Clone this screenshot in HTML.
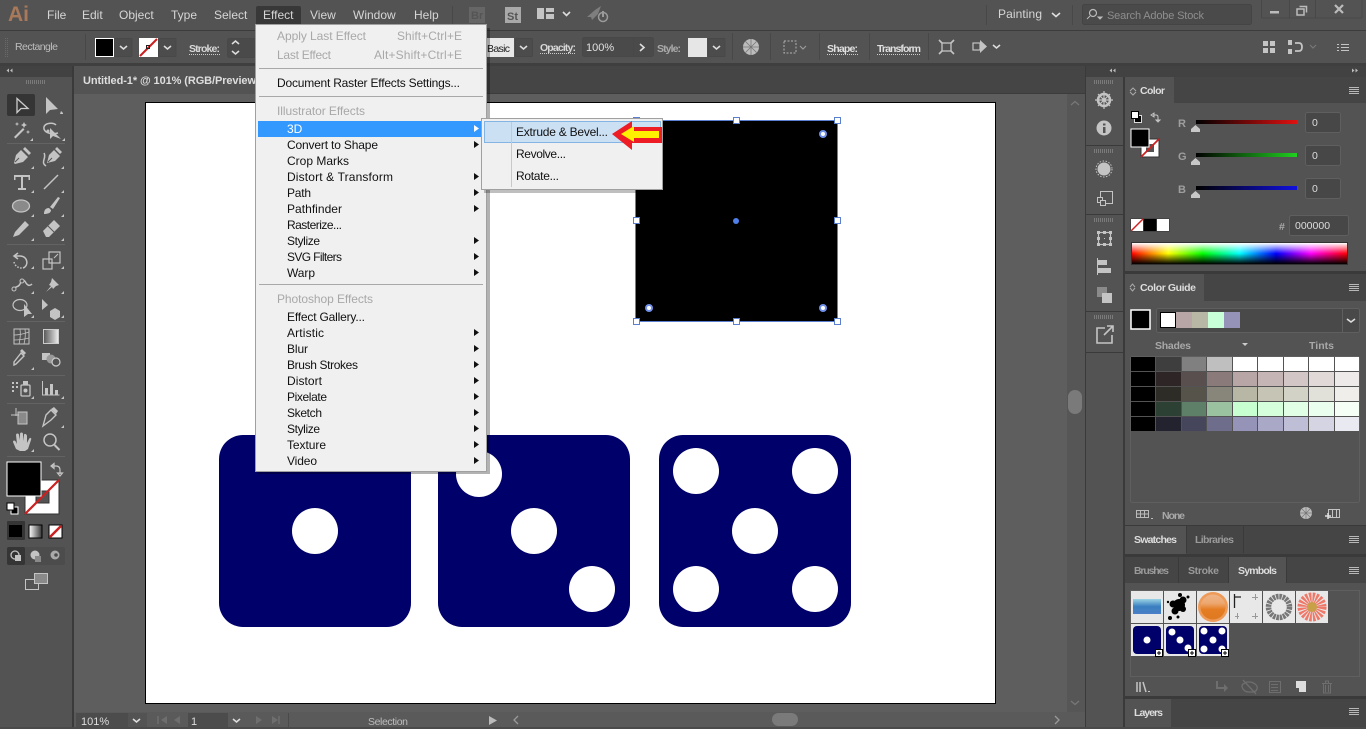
<!DOCTYPE html>
<html lang="en"><head><meta charset="utf-8"><title>Illustrator</title>
<style>
html,body{margin:0;padding:0;width:1366px;height:729px;overflow:hidden;background:#535353}
svg{display:block}
text{font-family:"Liberation Sans",sans-serif;font-size:12px}
.mb{fill:#d6d6d6;font-size:12px}
.c{fill:#d2d2d2;font-size:10.5px}
.b{font-weight:bold}
.m{fill:#111;font-size:12px}
.d{fill:#a8a8a8;font-size:12px}
.t{fill:#ddd;font-size:10.5px;font-weight:bold}
.t2{fill:#9a9a9a;font-size:10.5px;font-weight:bold}
.i{fill:#c4c4c4}
.s{fill:none;stroke:#c4c4c4;stroke-width:1.5}
.ch{fill:none;stroke:#ddd;stroke-width:1.6}
.u{stroke:#ccc;stroke-width:1;stroke-dasharray:1 1;fill:none}
.ar{fill:#111}
.hb{stroke:#b8b8b8;stroke-width:1;fill:none}
.gr{stroke:#7a7a7a;stroke-width:1;stroke-dasharray:1 0;fill:none}
</style></head><body>
<svg width="1366" height="729" viewBox="0 0 1366 729" xmlns="http://www.w3.org/2000/svg">
<rect width="1366" height="729" fill="#535353"/>

<!-- top menu bar -->
<rect x="0" y="30" width="1366" height="1" fill="#3c3c3c"/>
<text x="8" y="21" style="font-size:21px;font-weight:bold;fill:#a8795a">Ai</text>
<text class="mb" x="47" y="19">File</text>
<text class="mb" x="82" y="19">Edit</text>
<text class="mb" x="119" y="19">Object</text>
<text class="mb" x="171" y="19">Type</text>
<text class="mb" x="214" y="19">Select</text>
<rect x="256" y="6" width="45" height="20" rx="2" fill="#383838"/>
<text class="mb" x="263" y="19">Effect</text>
<text class="mb" x="310" y="19">View</text>
<text class="mb" x="353" y="19">Window</text>
<text class="mb" x="414" y="19">Help</text>
<rect x="452" y="6" width="1" height="18" fill="#484848"/>
<rect x="469" y="7" width="16" height="16" fill="#666"/>
<text x="471" y="19" style="font-size:11px;font-weight:bold;fill:#555">Br</text>
<rect x="505" y="7" width="16" height="16" fill="#a9a9a9"/>
<text x="507" y="20" style="font-size:11px;font-weight:bold;fill:#555">St</text>
<path d="M537 8h7v11h-7zM546 8h8v4h-8zM546 14h8v5h-8z" fill="#c4c4c4"/>
<path d="M563 12l3.500 3.500L570 12" class="ch"/>
<path d="M587 17l8-7 6-4-3 8-6 6-1-3z" fill="#7e7e7e"/>
<circle cx="603" cy="17" r="4.500" fill="none" stroke="#9a9a9a" stroke-width="1.500"/>
<rect x="602" y="11" width="2" height="6" fill="#9a9a9a"/>
<rect x="986" y="5" width="1" height="20" fill="#484848"/>
<text class="mb" x="998" y="18" textLength="44">Painting</text>
<path d="M1052 13l4 3.500 4-3.500" class="ch"/>
<rect x="1072" y="5" width="1" height="20" fill="#484848"/>
<rect x="1082.500" y="4.500" width="169" height="20" rx="2" fill="#4a4a4a" stroke="#444"/>
<circle cx="1093" cy="13" r="3.500" fill="none" stroke="#bbb" stroke-width="1.200"/>
<path d="M1090 16l-3 3M1098 17h4l-2 2z" stroke="#bbb" fill="#bbb" stroke-width="1"/>
<text x="1107" y="19" style="font-size:11px;fill:#8e8e8e" textLength="97">Search Adobe Stock</text>
<path d="M1261.500 0v16.500q0 1.500 2 1.500h97q1.500 0 1.500-1.500V0M1289.500 0v18M1315.500 0v18" fill="none" stroke="#484848"/>
<rect x="1270" y="11" width="9" height="2.500" fill="#bbb"/>
<path d="M1297 9h7v6h-7zM1299.500 6.500h7v6" fill="none" stroke="#bbb" stroke-width="1.500"/>
<path d="M1335 5l8 8M1343 5l-8 8" stroke="#bbb" stroke-width="2.200"/>

<!-- control bar -->
<rect x="0" y="63" width="1366" height="3" fill="#3f3f3f"/>
<path d="M5.500 38v19M7.500 38v19" stroke="#6a6a6a" stroke-dasharray="1 1" fill="none"/>
<text class="c" x="15" y="50" style="fill:#bdbdbd" textLength="43">Rectangle</text>
<rect x="85" y="34" width="1" height="26" fill="#484848"/>
<rect x="95.500" y="38.500" width="18" height="18" fill="#000" stroke="#fff"/>
<rect x="114.500" y="38.500" width="17.500" height="18" rx="1" fill="#4c4c4c" stroke="#484848"/>
<path d="M120 46l3.500 3 3.500-3" class="ch"/>
<rect x="139" y="38" width="19" height="19" fill="#fff"/>
<path d="M140 56l17-17" stroke="#cc2020" stroke-width="2"/>
<rect x="146.500" y="45.500" width="3" height="3" fill="none" stroke="#222"/>
<rect x="158.500" y="38.500" width="17.500" height="18" rx="1" fill="#4c4c4c" stroke="#484848"/>
<path d="M164 46l3.500 3 3.500-3" class="ch"/>
<text class="c b" x="189" y="52" style="fill:#d8d8d8" textLength="31">Stroke:</text>
<path class="u" d="M189 54.500h31"/>
<rect x="227.500" y="38.500" width="28" height="19" rx="2" fill="#4a4a4a" stroke="#484848"/>
<path d="M232 44l3.500-3 3.500 3M232 51l3.500 3 3.500-3" class="ch"/>
<rect x="487" y="38" width="27" height="19" fill="#e8e8e8"/>
<text x="487" y="52" style="font-size:10.500px;fill:#222" textLength="23">Basic</text>
<rect x="515.500" y="38.500" width="17" height="18" rx="1" fill="#4c4c4c" stroke="#484848"/>
<path d="M520 46l3.500 3 3.500-3" class="ch"/>
<text class="c b" x="540" y="51" style="fill:#d8d8d8" textLength="36">Opacity:</text>
<path class="u" d="M540 53.500h36"/>
<rect x="582.500" y="37.500" width="71" height="19" rx="2" fill="#4a4a4a" stroke="#484848"/>
<rect x="633" y="38" width="1" height="18" fill="#484848"/>
<text class="c" x="586" y="51" style="fill:#e0e0e0;font-size:11px">100%</text>
<path d="M640 44l4 3.500-4 3.500" class="ch"/>
<text class="c b" x="657" y="52" style="fill:#aaa" textLength="24">Style:</text>
<rect x="688" y="38" width="19" height="19" fill="#e6e6e6"/>
<rect x="708" y="38.500" width="17" height="18" rx="1" fill="#4c4c4c" stroke="#484848"/>
<path d="M713 46l3.500 3 3.500-3" class="ch"/>
<rect x="732" y="33" width="1" height="27" fill="#484848"/>
<circle cx="751" cy="47" r="8" fill="#bcbcbc"/>
<path d="M751 39v16M743 47h16M745 41l12 12M757 41l-12 12" stroke="#777" stroke-width=".8"/>
<rect x="770" y="33" width="1" height="27" fill="#484848"/>
<rect x="784" y="41" width="12" height="12" fill="none" stroke="#b0b0b0" stroke-dasharray="2 1.500"/>
<path d="M800 46l3 3 3-3" fill="none" stroke="#9a9a9a" stroke-width="1.200"/>
<rect x="819" y="33" width="1" height="27" fill="#484848"/>
<text class="c b" x="827" y="52" style="fill:#e0e0e0" textLength="31">Shape:</text>
<path class="u" d="M827 54.500h31"/>
<rect x="869" y="33" width="1" height="27" fill="#484848"/>
<text class="c b" x="877" y="52" style="fill:#e0e0e0" textLength="44">Transform</text>
<path class="u" d="M877 54.500h44"/>
<rect x="928" y="33" width="1" height="27" fill="#484848"/>
<rect x="942" y="43" width="9" height="8" fill="none" stroke="#c4c4c4" stroke-width="1.300"/>
<path d="M939 40l3.500 3.500M954 40l-3.500 3.500M939 54l3.500-3.500M954 54l-3.500-3.500" stroke="#c4c4c4" stroke-width="1.600"/>
<rect x="973" y="43" width="7" height="7" fill="none" stroke="#c4c4c4" stroke-width="1.200"/>
<path d="M980 40v13l7-6.500z" fill="#c4c4c4"/>
<path d="M993 45l3.500 3 3.500-3" class="ch"/>
<path d="M1263 41h5v5h-5zM1270 41h5v5h-5zM1263 48h5v5h-5zM1270 48h5v5h-5z" fill="#c4c4c4"/>
<path d="M1288 40h4v5h-4zM1288 49h4v5h-4z" fill="#c4c4c4"/><path d="M1295 43h4q3 0 3 4t-3 4h-4" fill="none" stroke="#c4c4c4" stroke-width="1.800"/>
<path d="M1310 45l3 3 3-3" fill="none" stroke="#777" stroke-width="1.200"/>
<path d="M1337 44.500h2M1341 44.500h8M1337 47.500h2M1341 47.500h8M1337 50.500h2M1341 50.500h8" stroke="#c4c4c4" stroke-width="1"/>

<!-- left tools -->
<rect x="0" y="66" width="72" height="11" fill="#424242"/>
<rect x="72" y="66" width="2" height="663" fill="#3a3a3a"/>
<path d="M9 68.500v4l-2.500-2zM12.500 68.500v4l-2.500-2z" fill="#bbb"/>
<path d="M26.500 80v4M28.500 80v4M30.500 80v4M32.500 80v4M34.500 80v4M36.500 80v4M38.500 80v4M40.500 80v4M42.500 80v4M44.500 80v4" class="gr"/>
<rect x="7" y="94" width="28" height="22" rx="2" fill="#353535"/>
<path d="M17 98.500v14l4-4 7 0z" fill="none" stroke="#ccc" stroke-width="1.300"/>
<path d="M46 97v17l4-4 8-1z" class="i"/>
<path d="M61 111l2 2v1h-3z" class="i"/>
<path d="M14 137l9-9 1.500 1.500-9 9z" class="i"/><path d="M24 122l1 2 2 1-2 1-1 2-1-2-2-1 2-1zM17 122l.7 1.500 1.500.5-1.500.5-.7 1.500-.7-1.500-1.500-.5 1.500-.5zM28 130l.7 1.500 1.500.5-1.500.5-.7 1.500-.7-1.500-1.500-.5 1.500-.5z" class="i"/>
<path d="M58 133c-8 2-15-1-14-6 1-4 9-5 12-2" class="s"/><path d="M50 128v11l3-3 8 3z" class="i"/><circle cx="48" cy="131" r="1.500" class="i"/>
<rect x="7" y="143" width="58" height="1" fill="#636363"/>
<path d="M14 163l2-8 5-5 7 7-5 5-8 2zM23 149l2-2 6 6-2 2z" class="i"/><path d="M15 162l4-4" stroke="#535353"/>
<path d="M46 166c-6-4 1-8-2-13" class="s"/><path d="M47 163l2-8 5-5 6 6-5 5zM55 149l2-2 5 5-2 2z" class="i"/><path d="M48 162l4-4" stroke="#535353"/>
<path d="M14 175h16v5h-1.500v-3h-5.500v11h3v2h-8v-2h3v-11h-5.500v3H14z" class="i"/>
<path d="M44 189l14-14" class="s"/>
<ellipse cx="21" cy="206" rx="8.500" ry="6" fill="#8a8a8a" stroke="#c4c4c4" stroke-width="1.300"/>
<path d="M44 214c0-3 1-6 5-6l2 2c0 3-3 4-7 4zM50 207l8-10 2 1-7 11z" class="i"/>
<path d="M13 237l2-5 10-11 4 4-10 10z" class="i"/>
<path d="M43 231l11-11 6 6-11 11h-3z" class="i"/><path d="M47 225l7 7" stroke="#535353"/>
<rect x="7" y="244" width="58" height="1" fill="#636363"/>
<path d="M18 253l-4 3 4 3M15 256h5c8 0 9 10 3 12" class="s"/><path d="M14 262c1 4 4 6 8 6" class="s" stroke-dasharray="1.500 1.500"/>
<rect x="43" y="259" width="9" height="10" fill="none" stroke="#c4c4c4" stroke-width="1.200"/><rect x="49" y="252" width="11" height="11" fill="none" stroke="#c4c4c4" stroke-width="1.200"/><path d="M54 258l4-4" stroke="#c4c4c4"/>
<path d="M14 289c3-4 4-1 6-5 2-5 4-5 6-1 2 3 4 3 6 1" class="s" stroke-width="2.500"/><circle cx="14" cy="289" r="2" fill="#535353" stroke="#c4c4c4"/><circle cx="22" cy="281" r="2" fill="#535353" stroke="#c4c4c4"/>
<path d="M52 278l7 7-3 1-3 3-1-2-6 5 5-6-2-1 2-3z" class="i"/>
<ellipse cx="20" cy="305" rx="7" ry="5.500" fill="none" stroke="#c4c4c4" stroke-width="1.200"/><path d="M24 304v13l4-3 4 0z" class="i"/>
<path d="M42 299v11l6-5z" class="i"/><path d="M50 311l5-3 5 3v6l-5 3-5-3z" class="i"/>
<rect x="7" y="321" width="58" height="1" fill="#636363"/>
<rect x="14" y="329" width="15" height="15" fill="none" stroke="#c4c4c4"/><path d="M14 335q7 0 15-3M14 340q7 0 15-2M20 329q1 7-1 15M25 329q1 7-1 15" stroke="#c4c4c4" fill="none" stroke-width=".8"/>
<defs><linearGradient id="g1"><stop offset="0" stop-color="#555"/><stop offset="1" stop-color="#eee"/></linearGradient><linearGradient id="g2"><stop offset="0" stop-color="#fff"/><stop offset="1" stop-color="#333"/></linearGradient>
<linearGradient id="r"><stop offset="0" stop-color="#000"/><stop offset="1" stop-color="#e01010"/></linearGradient><linearGradient id="gg"><stop offset="0" stop-color="#000"/><stop offset="1" stop-color="#20d020"/></linearGradient><linearGradient id="bb"><stop offset="0" stop-color="#000"/><stop offset="1" stop-color="#1010e0"/></linearGradient>
<linearGradient id="spec"><stop offset="0" stop-color="#f00"/><stop offset=".17" stop-color="#ff0"/><stop offset=".33" stop-color="#0f0"/><stop offset=".5" stop-color="#0ff"/><stop offset=".67" stop-color="#00f"/><stop offset=".83" stop-color="#f0f"/><stop offset="1" stop-color="#f00"/></linearGradient>
<linearGradient id="w" x2="0" y2="1"><stop offset="0" stop-color="#fff"/><stop offset=".5" stop-color="#fff" stop-opacity="0"/><stop offset=".5" stop-color="#000" stop-opacity="0"/><stop offset="1" stop-color="#000"/></linearGradient>
<linearGradient id="orb" x2="0" y2="1"><stop offset="0" stop-color="#eeb488"/><stop offset=".35" stop-color="#eda870"/><stop offset=".6" stop-color="#e47c22"/><stop offset="1" stop-color="#de7a22"/></linearGradient>
<linearGradient id="bl" x2="0" y2="1"><stop offset="0" stop-color="#9cd4e6"/><stop offset=".5" stop-color="#3a7fc0"/><stop offset="1" stop-color="#4b80c8"/></linearGradient></defs>
<rect x="43.500" y="329.500" width="15" height="14" fill="url(#g1)" stroke="#ccc"/>
<path d="M14 362l7-9 3 3-8 8-2 1z" fill="none" stroke="#c4c4c4" stroke-width="1.400"/><path d="M22 349l4 4-2 2-4-4z" class="i"/>
<rect x="42" y="353" width="8" height="7" class="i"/><circle cx="51" cy="359" r="4.500" fill="#999"/><circle cx="56" cy="362" r="4" fill="#535353" stroke="#ccc" stroke-width="1.200"/>
<rect x="7" y="375" width="58" height="1" fill="#636363"/>
<path d="M12 382h2v2h-2zM16 382h2v2h-2zM12 386h2v2h-2zM16 386h2v2h-2zM12 390h2v2h-2z" class="i"/><rect x="21" y="385" width="9" height="11" rx="1" fill="none" stroke="#c4c4c4" stroke-width="1.300"/><rect x="23" y="381" width="5" height="4" class="i"/><circle cx="25.500" cy="390.500" r="2" class="i"/>
<path d="M42.500 381v14h17" fill="none" stroke="#c4c4c4"/><path d="M45 388h3v7h-3zM50 384h3v11h-3zM55 390h3v5h-3z" class="i"/>
<rect x="7" y="403" width="58" height="1" fill="#636363"/>
<path d="M18 412h9v12h-9z" fill="#8a8a8a" stroke="#c4c4c4"/><path d="M11 415h8M16 408v8" stroke="#c4c4c4"/>
<path d="M43 426l3-11 5-5 5 5-5 5z" fill="none" stroke="#c4c4c4" stroke-width="1.400"/><path d="M51 409l3-2 4 4-2 3z" class="i"/>
<path d="M16 449l-3-7c0-2 2-2 3 0l1 2-1-9c0-2 3-2 3 0l1 5v-6c0-2 3-2 3 0v7l1-6c0-2 3-1 3 1v7l2-4c1-2 3-1 2 1l-3 9-3 2h-5z" class="i"/>
<circle cx="50" cy="440" r="6" fill="none" stroke="#c4c4c4" stroke-width="1.500"/><path d="M54.500 445l5 5" stroke="#c4c4c4" stroke-width="2"/>
<rect x="7" y="456" width="58" height="1" fill="#636363"/>
<path d="M33 141v-3l-3 3zM65 141v-3l-3 3zM34 169v-3l-3 3zM64 169v-3l-3 3zM34 193v-3l-3 3zM64 193v-3l-3 3zM34 217v-3l-3 3zM64 217v-3l-3 3zM34 241v-3l-3 3zM64 241v-3l-3 3zM34 269v-3l-3 3zM64 269v-3l-3 3zM34 294v-3l-3 3zM64 294v-3l-3 3zM34 318v-3l-3 3zM64 318v-3l-3 3zM34 370v-3l-3 3zM64 399v-3l-3 3zM34 399v-3l-3 3zM64 428v-3l-3 3zM34 452v-3l-3 3z" class="i"/>
<!-- fill/stroke -->
<rect x="25" y="480" width="34" height="34" fill="#fff" stroke="#333"/>
<rect x="36" y="491" width="13" height="12" fill="#535353" stroke="#333"/>
<path d="M25 514l34-34" stroke="#cc2020" stroke-width="2.200"/>
<rect x="7" y="462" width="34" height="34" fill="#000" stroke="#fff" stroke-width="1"/>
<path d="M52 466h4q4 0 4 4v4M51 466l3-2.500v5zM60 476l-2.500-3h5z" fill="none" stroke="#c4c4c4" stroke-width="1.200"/>
<rect x="11" y="507" width="7" height="7" fill="#000" stroke="#fff"/><rect x="7" y="503" width="7" height="7" fill="#fff" stroke="#000"/>
<rect x="7" y="521" width="18" height="19" rx="1" fill="#353535"/><rect x="9" y="525" width="13" height="12" fill="#000"/>
<rect x="29" y="525" width="13" height="13" fill="url(#g2)" stroke="#000"/>
<rect x="49" y="525" width="13" height="13" fill="#fff" stroke="#000"/><path d="M50 537l11-11" stroke="#cc2020" stroke-width="2.500"/>
<rect x="7" y="547" width="58" height="18" rx="2" fill="#4c4c4c"/>
<rect x="7" y="547" width="18" height="18" rx="2" fill="#353535"/>
<circle cx="15" cy="555" r="4" fill="none" stroke="#c4c4c4" stroke-width="1.300"/><rect x="15" y="555" width="6" height="6" class="i"/>
<circle cx="35" cy="555" r="4.500" class="i"/><rect x="35" y="556" width="6" height="6" fill="#8a8a8a"/>
<circle cx="55" cy="555" r="4.500" fill="#aaa"/><circle cx="56" cy="555" r="1.800" fill="#4c4c4c"/>
<rect x="25.500" y="579.500" width="13" height="10" fill="none" stroke="#c4c4c4"/><rect x="34.500" y="573.500" width="13" height="10" fill="#8a8a8a" stroke="#c4c4c4"/>

<!-- document area -->
<rect x="74" y="66" width="1011" height="28" fill="#454545"/>
<rect x="74" y="66" width="190" height="28" fill="#535353"/>
<rect x="264" y="93" width="821" height="1" fill="#3c3c3c"/>
<text x="83" y="84" style="font-size:11px;font-weight:bold;fill:#dedede" textLength="173">Untitled-1* @ 101% (RGB/Preview</text>
<rect x="74" y="94" width="1011" height="618" fill="#5e5e5e"/>
<rect x="1067" y="94" width="18" height="618" fill="#565656"/>
<path d="M1071 105l4-3.500 4 3.500M1071 701l4 3.500 4-3.500" fill="none" stroke="#777" stroke-width="1.300"/>
<rect x="1068" y="390" width="14" height="24" rx="7" fill="#7a7a7a"/>
<rect x="145.500" y="102.500" width="850" height="601" fill="#fff" stroke="#000"/>

<!-- dice -->
<rect x="219" y="435" width="192" height="192" rx="24" fill="#00006a"/>
<circle cx="315" cy="531" r="23" fill="#fff"/>
<rect x="438" y="435" width="192" height="192" rx="24" fill="#00006a"/>
<circle cx="479" cy="474" r="23" fill="#fff"/><circle cx="534" cy="531" r="23" fill="#fff"/><circle cx="592" cy="589" r="23" fill="#fff"/>
<rect x="659" y="435" width="192" height="192" rx="24" fill="#00006a"/>
<circle cx="696" cy="471" r="23" fill="#fff"/><circle cx="815" cy="471" r="23" fill="#fff"/><circle cx="755" cy="531" r="23" fill="#fff"/><circle cx="696" cy="589" r="23" fill="#fff"/><circle cx="815" cy="589" r="23" fill="#fff"/>

<!-- selected black square -->
<rect x="636" y="121" width="201" height="201" fill="#000"/>
<rect x="635.500" y="120.500" width="202" height="201" fill="none" stroke="#5b7fd0"/>
<g fill="#fff" stroke="#5b7fd0">
<rect x="633.500" y="117.500" width="6" height="6"/><rect x="733.500" y="117.500" width="6" height="6"/><rect x="834.500" y="117.500" width="6" height="6"/>
<rect x="633.500" y="217.500" width="6" height="6"/><rect x="834.500" y="217.500" width="6" height="6"/>
<rect x="633.500" y="318.500" width="6" height="6"/><rect x="733.500" y="318.500" width="6" height="6"/><rect x="834.500" y="318.500" width="6" height="6"/>
</g>
<g fill="#fff" stroke="#6f8fe8" stroke-width="2"><circle cx="823" cy="134" r="3"/><circle cx="649" cy="308" r="3"/><circle cx="823" cy="308" r="3"/></g>
<circle cx="736" cy="221" r="3" fill="#4f7fe8"/>

<!-- effect menu -->
<rect x="258" y="28" width="232" height="446" fill="#000" opacity=".3"/>
<rect x="255.500" y="24.500" width="231" height="447" fill="#f0f0f0" stroke="#a0a0a0"/>
<text class="d" x="277" y="40" textLength="89">Apply Last Effect</text>
<text class="d" x="397" y="40" textLength="65">Shift+Ctrl+E</text>
<text class="d" x="277" y="59" textLength="54">Last Effect</text>
<text class="d" x="374" y="59" textLength="88">Alt+Shift+Ctrl+E</text>
<rect x="259" y="68" width="224" height="1" fill="#a8a8a8"/>
<text class="m" x="277" y="87" textLength="183">Document Raster Effects Settings...</text>
<rect x="259" y="96" width="224" height="1" fill="#a8a8a8"/>
<text class="d" x="277" y="115" textLength="88">Illustrator Effects</text>
<rect x="258" y="121" width="225" height="16" fill="#3399ff"/>
<text x="287" y="133" style="font-size:12px;fill:#fff">3D</text>
<path d="M474 125v7l5-3.500z" fill="#fff"/>
<text class="m" x="287" y="149" textLength="91">Convert to Shape</text>
<text class="m" x="287" y="165" textLength="62">Crop Marks</text>
<text class="m" x="287" y="181" textLength="106">Distort &amp; Transform</text>
<text class="m" x="287" y="197" textLength="24">Path</text>
<text class="m" x="287" y="213" textLength="55">Pathfinder</text>
<text class="m" x="287" y="229" textLength="55">Rasterize...</text>
<text class="m" x="287" y="245" textLength="33">Stylize</text>
<text class="m" x="287" y="261" textLength="55">SVG Filters</text>
<text class="m" x="287" y="277" textLength="28">Warp</text>
<text class="m" x="287" y="321" textLength="78">Effect Gallery...</text>
<text class="m" x="287" y="337" textLength="37">Artistic</text>
<text class="m" x="287" y="353" textLength="21">Blur</text>
<text class="m" x="287" y="369" textLength="71">Brush Strokes</text>
<text class="m" x="287" y="385" textLength="35">Distort</text>
<text class="m" x="287" y="401" textLength="40">Pixelate</text>
<text class="m" x="287" y="417" textLength="35">Sketch</text>
<text class="m" x="287" y="433" textLength="33">Stylize</text>
<text class="m" x="287" y="449" textLength="39">Texture</text>
<text class="m" x="287" y="465" textLength="30">Video</text>
<path class="ar" d="M474 141v7l5-3.500zM474 173v7l5-3.500zM474 189v7l5-3.500zM474 205v7l5-3.500zM474 237v7l5-3.500zM474 253v7l5-3.500zM474 269v7l5-3.500zM474 329v7l5-3.500zM474 345v7l5-3.500zM474 361v7l5-3.500zM474 377v7l5-3.500zM474 393v7l5-3.500zM474 409v7l5-3.500zM474 425v7l5-3.500zM474 441v7l5-3.500zM474 457v7l5-3.500z"/>
<rect x="259" y="284" width="224" height="1" fill="#a8a8a8"/>
<text class="d" x="277" y="303" textLength="96">Photoshop Effects</text>

<!-- submenu -->
<rect x="484" y="121" width="182" height="72" fill="#000" opacity=".25"/>
<rect x="481.500" y="118.500" width="181" height="71" fill="#f0f0f0" stroke="#a0a0a0"/>
<rect x="484.500" y="121.500" width="176" height="21" fill="#cce0f4" stroke="#84b4e4"/>
<rect x="511" y="122" width="1" height="65" fill="#c8c8c8"/>
<text class="m" x="516" y="136" textLength="92">Extrude &amp; Bevel...</text>
<text class="m" x="516" y="158" textLength="50">Revolve...</text>
<text class="m" x="516" y="180" textLength="43">Rotate...</text>
<path d="M612 134l20-13v6h30v16h-30v7z" fill="#ee1c24"/>
<path d="M621 134l13-8v5h25v7h-25v4z" fill="#fff200"/>

<!-- right strip -->
<rect x="1085" y="66" width="281" height="663" fill="#3a3a3a"/>
<rect x="1086" y="66" width="280" height="11" fill="#424242"/>
<path d="M1112 68.500v4l-2.500-2zM1115.500 68.500v4l-2.500-2zM1352 68.500v4l2.500-2zM1355.500 68.500v4l2.500-2z" fill="#bbb"/>
<rect x="1086" y="77" width="37" height="652" fill="#535353"/>
<path d="M1094.500 80v4M1096.500 80v4M1098.500 80v4M1100.500 80v4M1102.500 80v4M1104.500 80v4M1106.500 80v4M1108.500 80v4M1110.500 80v4M1112.500 80v4M1094.500 149v4M1096.500 149v4M1098.500 149v4M1100.500 149v4M1102.500 149v4M1104.500 149v4M1106.500 149v4M1108.500 149v4M1110.500 149v4M1112.500 149v4M1094.500 218v4M1096.500 218v4M1098.500 218v4M1100.500 218v4M1102.500 218v4M1104.500 218v4M1106.500 218v4M1108.500 218v4M1110.500 218v4M1112.500 218v4M1094.500 315v4M1096.500 315v4M1098.500 315v4M1100.500 315v4M1102.500 315v4M1104.500 315v4M1106.500 315v4M1108.500 315v4M1110.500 315v4M1112.500 315v4" class="gr"/>
<circle cx="1104" cy="100" r="6" fill="none" stroke="#c4c4c4" stroke-width="2.500"/><circle cx="1104" cy="100" r="2" class="i"/><path d="M1104 91v18M1095 100h18M1098 94l12 12M1110 94l-12 12" stroke="#c4c4c4" stroke-width="1.200"/>
<circle cx="1104" cy="128" r="7.500" class="i"/><rect x="1103" y="127" width="2.500" height="6" fill="#535353"/><rect x="1103" y="123.500" width="2.500" height="2" fill="#535353"/>
<rect x="1086" y="145" width="37" height="1" fill="#3a3a3a"/>
<circle cx="1104" cy="169" r="6.500" class="i"/><circle cx="1104" cy="169" r="8" fill="none" stroke="#c4c4c4" stroke-dasharray="1.500 1.500"/>
<rect x="1100.500" y="191.500" width="12" height="12" fill="none" stroke="#c4c4c4"/><rect x="1097.500" y="197.500" width="5" height="5" fill="#535353" stroke="#c4c4c4"/><rect x="1100.500" y="200.500" width="5" height="5" fill="#535353" stroke="#c4c4c4"/>
<rect x="1086" y="214" width="37" height="1" fill="#3a3a3a"/>
<rect x="1098.500" y="232.500" width="12" height="12" fill="none" stroke="#c4c4c4" stroke-width="1.200"/><path d="M1097 231h3v3h-3zM1109 231h3v3h-3zM1097 243h3v3h-3zM1109 243h3v3h-3zM1103 231h3v3h-3zM1103 243h3v3h-3zM1097 237h3v3h-3zM1109 237h3v3h-3zM1104 238h1v1h-1z" class="i"/>
<path d="M1097.500 258v17" stroke="#c4c4c4"/><rect x="1098" y="260" width="9" height="5" class="i"/><rect x="1098" y="268" width="13" height="5" class="i"/>
<rect x="1097" y="287" width="10" height="10" fill="#8a8a8a"/><rect x="1102" y="293" width="10" height="10" class="i"/>
<rect x="1086" y="311" width="37" height="1" fill="#3a3a3a"/>
<path d="M1105 328h-8v15h15v-8" fill="none" stroke="#c4c4c4" stroke-width="1.600"/><path d="M1104 335l9-9M1107 326h6v6" fill="none" stroke="#c4c4c4" stroke-width="1.600"/>
<rect x="1086" y="352" width="37" height="1" fill="#3a3a3a"/>

<!-- Color panel -->
<rect x="1125" y="77" width="241" height="194" fill="#535353"/>
<rect x="1125" y="77" width="241" height="26" fill="#454545"/>
<rect x="1125" y="77" width="49" height="27" fill="#535353"/>
<path d="M1130 91l3-3 3 3M1130 92l3 3 3-3" fill="none" stroke="#aaa"/>
<text class="t" x="1140" y="94" textLength="25">Color</text>
<path d="M1349 87.500h10M1349 89.500h10M1349 91.500h10M1349 93.500h10" class="hb"/>
<rect x="1134.500" y="115.500" width="7" height="7" fill="#000" stroke="#ddd"/><rect x="1131.500" y="111.500" width="7" height="7" fill="#fff" stroke="#000"/>
<path d="M1151 115l3-2v4zM1153 115h3q2 0 2 2v4M1158 122l-2-2h4z" fill="none" stroke="#c4c4c4"/>
<rect x="1141" y="139" width="18" height="18" fill="#fff" stroke="#333"/><rect x="1146" y="144" width="8" height="8" fill="#535353"/><path d="M1141 157l18-18" stroke="#cc2020" stroke-width="1.800"/>
<rect x="1131" y="129" width="18" height="18" fill="#000" stroke="#fff"/>
<text x="1178" y="127" style="font-size:11px;font-weight:bold;fill:#9e9e9e">R</text>
<text x="1178" y="160" style="font-size:11px;font-weight:bold;fill:#9e9e9e">G</text>
<text x="1178" y="193" style="font-size:11px;font-weight:bold;fill:#9e9e9e">B</text>
<rect x="1196" y="120" width="101" height="4" fill="url(#r)"/><rect x="1196" y="153" width="101" height="4" fill="url(#gg)"/><rect x="1196" y="186" width="101" height="4" fill="url(#bb)"/>
<path d="M1191 132v-3l4.500-4 4.500 4v3zM1191 165v-3l4.500-4 4.500 4v3zM1191 198v-3l4.500-4 4.500 4v3z" fill="#c8c8c8"/>
<g fill="#474747" stroke="#5f5f5f"><rect x="1305.500" y="112.500" width="35" height="20" rx="2"/><rect x="1305.500" y="145.500" width="35" height="20" rx="2"/><rect x="1305.500" y="178.500" width="35" height="20" rx="2"/><rect x="1289.500" y="215.500" width="59" height="20" rx="2"/></g>
<text x="1312" y="126" style="font-size:10.500px;fill:#ddd">0</text><text x="1312" y="159" style="font-size:10.500px;fill:#ddd">0</text><text x="1312" y="192" style="font-size:10.500px;fill:#ddd">0</text>
<text x="1279" y="230" style="font-size:10.500px;font-weight:bold;fill:#aaa">#</text>
<text x="1295" y="229" style="font-size:10.500px;fill:#ddd">000000</text>
<rect x="1130.500" y="218.500" width="39" height="13" fill="#333"/><rect x="1131" y="219" width="12" height="12" fill="#fff"/><path d="M1131 231l12-12" stroke="#cc2020" stroke-width="1.500"/><rect x="1144" y="219" width="12" height="12" fill="#000"/><rect x="1157" y="219" width="12" height="12" fill="#fff"/>
<rect x="1131.500" y="242.500" width="216" height="22" fill="url(#spec)"/><rect x="1132" y="243" width="215" height="21" fill="url(#w)"/><rect x="1131.500" y="242.500" width="216" height="22" fill="none" stroke="#333"/>

<!-- Color Guide -->
<rect x="1125" y="274" width="241" height="251" fill="#535353"/>
<rect x="1125" y="274" width="241" height="27" fill="#454545"/>
<rect x="1125" y="274" width="79" height="28" fill="#535353"/>
<path d="M1130 287l2.500-3 2.500 3M1130 288l2.500 3 2.500-3" fill="none" stroke="#aaa"/>
<text class="t" x="1140" y="291" textLength="56">Color Guide</text>
<path d="M1349 284.500h10M1349 286.500h10M1349 288.500h10M1349 290.500h10" class="hb"/>
<rect x="1131" y="310" width="19" height="19" fill="#000" stroke="#fff" stroke-width="1.500"/>
<rect x="1156.500" y="308.500" width="203" height="24" rx="2" fill="#494949" stroke="#5f5f5f"/><rect x="1342" y="309" width="1" height="23" fill="#5f5f5f"/>
<path d="M1347 319l4 3 4-3" class="ch"/>
<rect x="1176" y="312" width="16" height="16" fill="#b8a5a5"/><rect x="1192" y="312" width="16" height="16" fill="#b8b6a5"/><rect x="1208" y="312" width="16" height="16" fill="#c8ffd8"/><rect x="1224" y="312" width="16" height="16" fill="#9594b8"/>
<rect x="1160.500" y="312.500" width="15" height="15" fill="#fff" stroke="#000"/>
<text x="1155" y="349" style="font-size:10.500px;font-weight:bold;fill:#a8a8a8" textLength="36">Shades</text>
<path d="M1242 343h6l-3 3z" fill="#ccc"/>
<text x="1309" y="349" style="font-size:10.500px;font-weight:bold;fill:#a8a8a8" textLength="25">Tints</text>
<rect x="1130.500" y="356.500" width="229" height="146" rx="2" fill="none" stroke="#5f5f5f"/>
<g>
<rect x="1131" y="357" width="24" height="14" fill="#000"/><rect x="1156" y="357" width="25" height="14" fill="#3e3e3e"/><rect x="1182" y="357" width="24" height="14" fill="#808080"/><rect x="1207" y="357" width="25" height="14" fill="#bfbfbf"/><rect x="1233" y="357" width="24" height="14" fill="#fff"/><rect x="1258" y="357" width="25" height="14" fill="#fff"/><rect x="1284" y="357" width="24" height="14" fill="#fff"/><rect x="1309" y="357" width="25" height="14" fill="#fff"/><rect x="1335" y="357" width="24" height="14" fill="#fff"/>
<rect x="1131" y="372" width="24" height="14" fill="#000"/><rect x="1156" y="372" width="25" height="14" fill="#2e2626"/><rect x="1182" y="372" width="24" height="14" fill="#5a4f4f"/><rect x="1207" y="372" width="25" height="14" fill="#8a7a7a"/><rect x="1233" y="372" width="24" height="14" fill="#b8a5a5"/><rect x="1258" y="372" width="25" height="14" fill="#c6b5b5"/><rect x="1284" y="372" width="24" height="14" fill="#d3c6c6"/><rect x="1309" y="372" width="25" height="14" fill="#e1d8d8"/><rect x="1335" y="372" width="24" height="14" fill="#efeaea"/>
<rect x="1131" y="387" width="24" height="14" fill="#000"/><rect x="1156" y="387" width="25" height="14" fill="#2e2c26"/><rect x="1182" y="387" width="24" height="14" fill="#55534a"/><rect x="1207" y="387" width="25" height="14" fill="#88867a"/><rect x="1233" y="387" width="24" height="14" fill="#b8b6a5"/><rect x="1258" y="387" width="25" height="14" fill="#c6c4b5"/><rect x="1284" y="387" width="24" height="14" fill="#d3d2c7"/><rect x="1309" y="387" width="25" height="14" fill="#e1e0d9"/><rect x="1335" y="387" width="24" height="14" fill="#efeeea"/>
<rect x="1131" y="402" width="24" height="14" fill="#000"/><rect x="1156" y="402" width="25" height="14" fill="#2c4033"/><rect x="1182" y="402" width="24" height="14" fill="#5f8068"/><rect x="1207" y="402" width="25" height="14" fill="#9bc2a0"/><rect x="1233" y="402" width="24" height="14" fill="#c8ffd0"/><rect x="1258" y="402" width="25" height="14" fill="#d5ffdb"/><rect x="1284" y="402" width="24" height="14" fill="#e1ffe5"/><rect x="1309" y="402" width="25" height="14" fill="#ebffee"/><rect x="1335" y="402" width="24" height="14" fill="#f5fff6"/>
<rect x="1131" y="417" width="24" height="14" fill="#000"/><rect x="1156" y="417" width="25" height="14" fill="#23232f"/><rect x="1182" y="417" width="24" height="14" fill="#45455b"/><rect x="1207" y="417" width="25" height="14" fill="#6e6e8c"/><rect x="1233" y="417" width="24" height="14" fill="#9594b8"/><rect x="1258" y="417" width="25" height="14" fill="#a9a8c6"/><rect x="1284" y="417" width="24" height="14" fill="#bebed6"/><rect x="1309" y="417" width="25" height="14" fill="#d4d4e3"/><rect x="1335" y="417" width="24" height="14" fill="#e9e9f1"/>
</g>
<path d="M1136.500 510.500h12v7h-12zM1136.500 514h12M1140.500 510.500v7M1144.500 510.500v7" fill="none" stroke="#bbb"/><path d="M1151 518h2v1h-2z" fill="#bbb"/>
<text x="1162" y="519" style="font-size:10.500px;font-weight:bold;fill:#a8a8a8" textLength="23">None</text>
<circle cx="1306" cy="513" r="6" fill="#bcbcbc"/><path d="M1306 507v12M1300 513h12M1302 509l8 8M1310 509l-8 8" stroke="#777" stroke-width=".7"/>
<path d="M1328.500 509.500h11v8h-11zM1332.500 509.500v8M1336.500 509.500v8" fill="none" stroke="#c4c4c4"/><path d="M1325 516h6M1328 513v6" stroke="#ddd" stroke-width="1.500"/>

<!-- Swatches -->
<rect x="1125" y="526" width="241" height="28" fill="#454545"/>
<rect x="1125" y="526" width="61" height="28" fill="#535353"/>
<rect x="1243" y="526" width="1" height="27" fill="#3a3a3a"/><rect x="1186" y="526" width="1" height="27" fill="#3a3a3a"/>
<text class="t" x="1134" y="543" textLength="43">Swatches</text>
<text class="t2" x="1195" y="543" textLength="39">Libraries</text>
<path d="M1349 536.500h10M1349 538.500h10M1349 540.500h10M1349 542.500h10" class="hb"/>

<!-- Symbols -->
<rect x="1125" y="557" width="241" height="139" fill="#535353"/>
<rect x="1125" y="557" width="241" height="26" fill="#454545"/>
<rect x="1229" y="557" width="57" height="27" fill="#535353"/>
<rect x="1178" y="557" width="1" height="26" fill="#3a3a3a"/><rect x="1228" y="557" width="1" height="26" fill="#3a3a3a"/><rect x="1286" y="557" width="1" height="26" fill="#3a3a3a"/>
<text class="t2" x="1134" y="574" textLength="35">Brushes</text>
<text class="t2" x="1188" y="574" textLength="31">Stroke</text>
<text class="t" x="1238" y="574" textLength="39">Symbols</text>
<path d="M1349 567.500h10M1349 569.500h10M1349 571.500h10M1349 573.500h10" class="hb"/>
<rect x="1130.500" y="590.500" width="229" height="86" fill="none" stroke="#5f5f5f"/>
<g fill="#e8e8e8">
<rect x="1131" y="591" width="32" height="32"/><rect x="1164" y="591" width="32" height="32"/><rect x="1197" y="591" width="32" height="32"/><rect x="1230" y="591" width="32" height="32"/><rect x="1263" y="591" width="32" height="32"/><rect x="1296" y="591" width="32" height="32"/>
<rect x="1131" y="624" width="32" height="32"/><rect x="1164" y="624" width="32" height="32"/><rect x="1197" y="624" width="32" height="32"/>
</g>
<rect x="1133" y="599" width="28" height="15" fill="url(#bl)"/>
<g fill="#000"><circle cx="1179" cy="605" r="6"/><circle cx="1173" cy="604" r="3.500"/><circle cx="1183" cy="600" r="3.500"/><circle cx="1175" cy="611" r="3.500"/><circle cx="1183" cy="609" r="3"/><circle cx="1180" cy="595" r="2"/><circle cx="1188" cy="597" r="1.500"/><circle cx="1168" cy="602" r="1.200"/><circle cx="1170" cy="618" r="2"/><circle cx="1178" cy="617" r="1.500"/></g>
<circle cx="1213" cy="607" r="15" fill="#ee9a58"/><circle cx="1213" cy="607" r="12.500" fill="url(#orb)"/>
<path d="M1234 597h7M1234.500 594v14" stroke="#222" stroke-width="1.300"/><path d="M1255.500 594v6M1252 597.500h6M1235 616.500h4M1237.500 613v6M1255.500 613v6M1252 616.500h6" stroke="#999"/>
<circle cx="1279" cy="607" r="10.500" fill="none" stroke="#777" stroke-width="5.500" stroke-dasharray="2.500 .8"/>
<circle cx="1312" cy="607" r="9.500" fill="none" stroke="#ef7868" stroke-width="10" stroke-dasharray="2 1"/><circle cx="1312" cy="607" r="5" fill="#c8a048"/>
<rect x="1133" y="626" width="28" height="28" rx="4" fill="#00006a"/><circle cx="1147" cy="640" r="3.500" fill="#fff"/>
<rect x="1166" y="626" width="28" height="28" rx="4" fill="#00006a"/><circle cx="1172" cy="632" r="3.500" fill="#fff"/><circle cx="1180" cy="640" r="3.500" fill="#fff"/><circle cx="1188" cy="648" r="3.500" fill="#fff"/>
<rect x="1199" y="626" width="28" height="28" rx="4" fill="#00006a"/><circle cx="1204" cy="631" r="3.500" fill="#fff"/><circle cx="1222" cy="631" r="3.500" fill="#fff"/><circle cx="1213" cy="640" r="3.500" fill="#fff"/><circle cx="1204" cy="649" r="3.500" fill="#fff"/><circle cx="1222" cy="649" r="3.500" fill="#fff"/>
<g fill="#fff" stroke="#000"><rect x="1155.500" y="649.500" width="7" height="7"/><rect x="1188.500" y="649.500" width="7" height="7"/><rect x="1221.500" y="649.500" width="7" height="7"/></g>
<path d="M1157 653h4M1159 651v4M1190 653h4M1192 651v4M1223 653h4M1225 651v4" stroke="#000"/>
<path d="M1137 682v10M1140 682v10M1143 682l3 10" stroke="#c4c4c4" stroke-width="1.500" fill="none"/><path d="M1148 691h2v1h-2z" fill="#c4c4c4"/>
<path d="M1218 681v6h6v-3l4 4-4 4v-3h-8v-8z" fill="#6e6e6e"/>
<path d="M1243 684q-2 2 0 5t6 3h3q4 0 5-3t-2-5q-3-2-5-2h-3zM1243 680l13 14" fill="none" stroke="#6e6e6e" stroke-width="1.300"/>
<rect x="1269.500" y="681.500" width="11" height="11" fill="none" stroke="#6e6e6e"/><path d="M1271 684.500h7M1271 687.500h7M1271 690.500h7" stroke="#6e6e6e"/>
<path d="M1296 681h10v11h-7v-4h-3z" fill="#ddd"/>
<path d="M1322 683.500h10M1325.500 683v-2h3v2M1323.500 684v9h7v-9M1325.500 685v7M1328.500 685v7" fill="none" stroke="#6e6e6e"/>

<!-- Layers -->
<rect x="1125" y="699" width="241" height="28" fill="#454545"/>
<rect x="1125" y="699" width="46" height="28" fill="#535353"/>
<text class="t" x="1134" y="716" textLength="29">Layers</text>
<path d="M1349 708.500h10M1349 710.500h10M1349 712.500h10M1349 714.500h10" class="hb"/>

<!-- bottom status bar -->
<rect x="74" y="712" width="1011" height="15" fill="#5a5a5a"/>
<rect x="76" y="713" width="52" height="14" fill="#4c4c4c"/><rect x="128" y="713" width="19" height="14" fill="#535353"/>
<text x="81" y="725" style="font-size:11px;fill:#ddd">101%</text>
<path d="M133 719l3.500 3 3.500-3" class="ch"/>
<path d="M158 716v8" stroke="#6e6e6e" stroke-width="1.500"/><path d="M167 716v8l-6-4zM180 716v8l-6-4z" fill="#6e6e6e"/>
<rect x="188" y="713" width="40" height="14" fill="#4c4c4c"/>
<text x="191" y="725" style="font-size:11px;fill:#ddd">1</text>
<path d="M233 719l3.500 3 3.500-3" class="ch"/>
<path d="M256 716v8l6-4zM272 716v8l6-4z" fill="#6e6e6e"/><path d="M279 716v8" stroke="#6e6e6e" stroke-width="1.500"/>
<rect x="288" y="713" width="1" height="14" fill="#4a4a4a"/>
<text x="368" y="725" style="font-size:10.500px;fill:#bbb" textLength="40">Selection</text>
<path d="M489 716v9l8-4.500z" fill="#bbb"/>
<path d="M518 716l-4 4 4 4M1055 716l4 4-4 4" fill="none" stroke="#999" stroke-width="1.300"/>
<rect x="772" y="713" width="26" height="13" rx="6.500" fill="#7a7a7a"/>
<rect x="0" y="727" width="1366" height="2" fill="#4a4a4a"/>
</svg>
</body></html>
